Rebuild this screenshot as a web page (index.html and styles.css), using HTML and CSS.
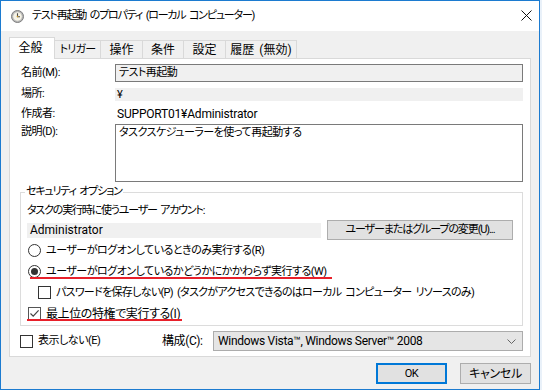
FILE: index.html
```html
<!DOCTYPE html>
<html lang="ja">
<head>
    <meta charset="UTF-8">
    <title>テスト再起動 のプロパティ (ローカル コンピューター)</title>
    <link rel="stylesheet" href="styles.css">
</head>
<body>
    <div class="window">
        <div class="titlebar">
            <svg class="app-icon" width="13" height="13" viewBox="0 0 13 13">
                <circle cx="6.5" cy="6.5" r="6" fill="#b9b9b9" stroke="#7d7d7d"/>
                <circle cx="6.5" cy="6.5" r="4.3" fill="#f6f3e6"/>
                <path d="M6.5 3.2 V6.7 H9" fill="none" stroke="#4a4a4a" stroke-width="1.1"/>
                <circle cx="6.5" cy="6.5" r="0.8" fill="#d8a020"/>
            </svg>
            <span class="title">テスト再起動 のプロパティ (ローカル コンピューター)</span>
            <svg class="close" width="11" height="11" viewBox="0 0 11 11">
                <path d="M0.5 0.5 L10.5 10.5 M10.5 0.5 L0.5 10.5" stroke="#111" stroke-width="1"/>
            </svg>
        </div>

        <div class="dialog">
            <div class="tabs">
                <div class="tab active">全般</div>
                <div class="tab kana w47">トリガー</div>
                <div class="tab w43">操作</div>
                <div class="tab w42">条件</div>
                <div class="tab w43">設定</div>
                <div class="tab w72">履歴 (無効)</div>
            </div>

            <div class="panel">
                <div class="field-row">
                    <label>名前(M):</label>
                    <div class="box name-box">テスト再起動</div>
                </div>
                <div class="field-row">
                    <label>場所:</label>
                    <div class="flat location">¥</div>
                </div>
                <div class="field-row author">
                    <label>作成者:</label>
                    <div class="plain latin">SUPPORT01¥Administrator</div>
                </div>
                <div class="field-row top">
                    <label>説明(D):</label>
                    <div class="box memo">タスクスケジューラーを使って再起動する</div>
                </div>

                <fieldset class="security">
                    <legend>セキュリティ オプション</legend>
                    <div class="account-label">タスクの実行時に使うユーザー アカウント:</div>
                    <div class="account-row">
                        <div class="flat account latin">Administrator</div>
                        <button class="btn change-btn">ユーザーまたはグループの変更(U)...</button>
                    </div>
                    <div class="option"><span class="radio"></span>ユーザーがログオンしているときのみ実行する(R)</div>
                    <div class="option"><span class="marked"><span class="radio checked"></span>ユーザーがログオンしているかどうかにかかわらず実行する(W)</span></div>
                    <div class="option sub"><span class="check"></span>パスワードを保存しない(P) (タスクがアクセスできるのはローカル コンピューター リソースのみ)</div>
                    <div class="option kanji"><span class="marked first"><span class="check checked">
                        <svg width="11" height="11" viewBox="0 0 11 11"><path d="M1.5 5.5 L4.2 8.2 L9.6 2.3" fill="none" stroke="#444" stroke-width="1.2"/></svg>
                    </span>最上位の特権で実行する(I)</span></div>
                </fieldset>

                <div class="bottom-row">
                    <div class="hidden-opt"><span class="check"></span>表示しない(E)</div>
                    <label class="config-label kanji">構成(C):</label>
                    <div class="select">
                        <span class="latin tight">Windows Vista™, Windows Server™ 2008</span>
                        <svg width="9" height="5" viewBox="0 0 9 5"><path d="M0.5 0.5 L4.5 4.5 L8.5 0.5" fill="none" stroke="#666" stroke-width="1"/></svg>
                    </div>
                </div>
            </div>

            <div class="actions">
                <button class="btn default latin">OK</button>
                <button class="btn cancel">キャンセル</button>
            </div>
        </div>
    </div>
</body>
</html>
```

FILE: styles.css
```css
* {
    margin: 0;
    padding: 0;
    box-sizing: border-box;
}

body {
    width: 543px;
    height: 390px;
    overflow: hidden;
    background: linear-gradient(to right, #fff 540px, #d4e3f3 541px, #fff 542px);
    font-family: Roboto, "Noto Sans CJK JP", sans-serif;
    font-size: 11px;
    letter-spacing: -0.5px;
    word-spacing: 2px;
    line-height: 14px;
    color: #000;
    font-feature-settings: "palt";
    white-space: nowrap;
}

.latin {
    font-size: 12px;
    letter-spacing: 0;
    word-spacing: 0;
}

.latin.tight {
    letter-spacing: -0.3px;
}

.kanji {
    font-size: 12px;
    letter-spacing: -0.4px;
}

.window {
    width: 540px;
    height: 390px;
    border: 1px solid #1c7bd0;
    background: #f0f0f0;
    display: flex;
    flex-direction: column;
}

/* タイトルバー */
.titlebar {
    height: 30px;
    flex-shrink: 0;
    background: #fff;
    display: flex;
    align-items: center;
    padding-left: 10px;
}

.app-icon {
    margin-right: 8px;
}

.title {
    padding-bottom: 1px;
    font-size: 11px;
    letter-spacing: -1.2px;
}

.close {
    margin-left: auto;
    margin-right: 7px;
    margin-top: -1px;
}

/* ダイアログ本体 */
.dialog {
    padding: 6px 8px 0 8px;
}

.tabs {
    display: flex;
    align-items: flex-end;
    height: 21px;
}

.tab {
    height: 18px;
    display: flex;
    align-items: center;
    justify-content: center;
    background: #f0f0f0;
    border: 1px solid #d9d9d9;
    border-bottom: none;
    margin-left: -1px;
    font-size: 12px;
    letter-spacing: 0;
}

.tab.kana {
    font-size: 11px;
    letter-spacing: -0.8px;
}

.w47 { width: 47px; }
.w43 { width: 43px; }
.w42 { width: 42px; }
.w72 { width: 72px; }

.tab.active {
    width: 46px;
    height: 22px;
    margin-left: 0;
    margin-bottom: -1px;
    padding: 0 3px 2px 0;
    background: #fff;
    position: relative;
    z-index: 1;
}

.panel {
    background: #fff;
    border: 1px solid #d9d9d9;
    padding: 5px 7px 5px 10px;
}

.field-row {
    display: grid;
    grid-template-columns: 95px 1fr;
    align-items: center;
    margin-top: 5px;
}

.field-row:first-child {
    margin-top: 0;
}

.field-row.author {
    margin-top: 6px;
}

.field-row.top {
    align-items: start;
    margin-top: 3px;
}

.field-row.top label {
    padding-top: 1px;
}

.field-row label {
    padding-left: 1px;
}

.box {
    border: 1px solid #7a7a7a;
    padding: 0 3px;
}

.name-box {
    height: 18px;
    line-height: 16px;
    background: #f0f0f0;
}

.flat {
    background: #f0f0f0;
}

.location {
    height: 13px;
    line-height: 13px;
    padding-left: 2px;
}

.plain {
    padding-left: 2px;
    height: 14px;
    letter-spacing: -0.2px;
}

.memo {
    height: 58px;
    background: #fff;
    padding-top: 1px;
}

/* セキュリティ オプション */
.security {
    margin-top: 3px;
    border: 1px solid #dcdcdc;
    padding: 0 9px 1px 6px;
    min-width: 0;
}

.security legend {
    padding: 0 1px;
    margin-left: -2px;
    letter-spacing: -1.2px;
}

.account-label {
    margin-top: 5px;
    letter-spacing: -1.2px;
}

.account-row {
    display: flex;
    align-items: center;
    gap: 6px;
    margin-top: 2px;
    height: 20px;
}

.account {
    width: 294px;
    height: 15px;
    line-height: 15px;
    padding-left: 3px;
}

.btn {
    font: inherit;
    letter-spacing: inherit;
    word-spacing: inherit;
    color: #000;
    background: #e1e1e1;
    border: 1px solid #adadad;
    height: 21px;
    line-height: 18px;
    white-space: nowrap;
}

.change-btn {
    width: 186px;
    height: 20px;
    letter-spacing: -1.1px;
}

.option {
    height: 21px;
    display: flex;
    align-items: center;
    padding-left: 1px;
}

.option.sub {
    padding-left: 11px;
    letter-spacing: -0.7px;
}

.marked {
    display: inline-flex;
    align-items: center;
    height: 21px;
    position: relative;
    padding-right: 2px;
}

.marked::after {
    content: "";
    position: absolute;
    left: 2px;
    right: -3px;
    bottom: 3px;
    height: 2px;
    background: #e8202a;
}

.marked.first::after {
    left: -1px;
    right: 0;
}

.radio {
    width: 13px;
    height: 13px;
    border: 1px solid #333;
    border-radius: 50%;
    margin-right: 5px;
    display: inline-flex;
    align-items: center;
    justify-content: center;
    background: #fff;
    flex-shrink: 0;
}

.radio.checked::before {
    content: "";
    width: 7px;
    height: 7px;
    border-radius: 50%;
    background: #333;
}

.check {
    width: 13px;
    height: 13px;
    border: 1px solid #333;
    margin-right: 5px;
    display: inline-flex;
    align-items: center;
    justify-content: center;
    background: #fff;
    flex-shrink: 0;
}

.check.checked {
    border-color: #555;
}

/* 下段 */
.bottom-row {
    display: flex;
    align-items: center;
    height: 20px;
    margin-top: 5px;
}

.hidden-opt {
    display: flex;
    align-items: center;
    width: 142px;
}

.config-label {
    width: 51px;
}

.select {
    flex: 1;
    height: 20px;
    background: #e5e5e5;
    border: 1px solid #acacac;
    display: flex;
    align-items: center;
    justify-content: space-between;
    padding: 0 6px 0 4px;
}

.actions {
    display: flex;
    justify-content: flex-end;
    gap: 13px;
    margin-top: 6px;
}

.actions .btn {
    width: 71px;
}

.btn.cancel {
    font-size: 12px;
    letter-spacing: -0.3px;
}

.btn.default {
    border: 2px solid #0078d7;
}
```
